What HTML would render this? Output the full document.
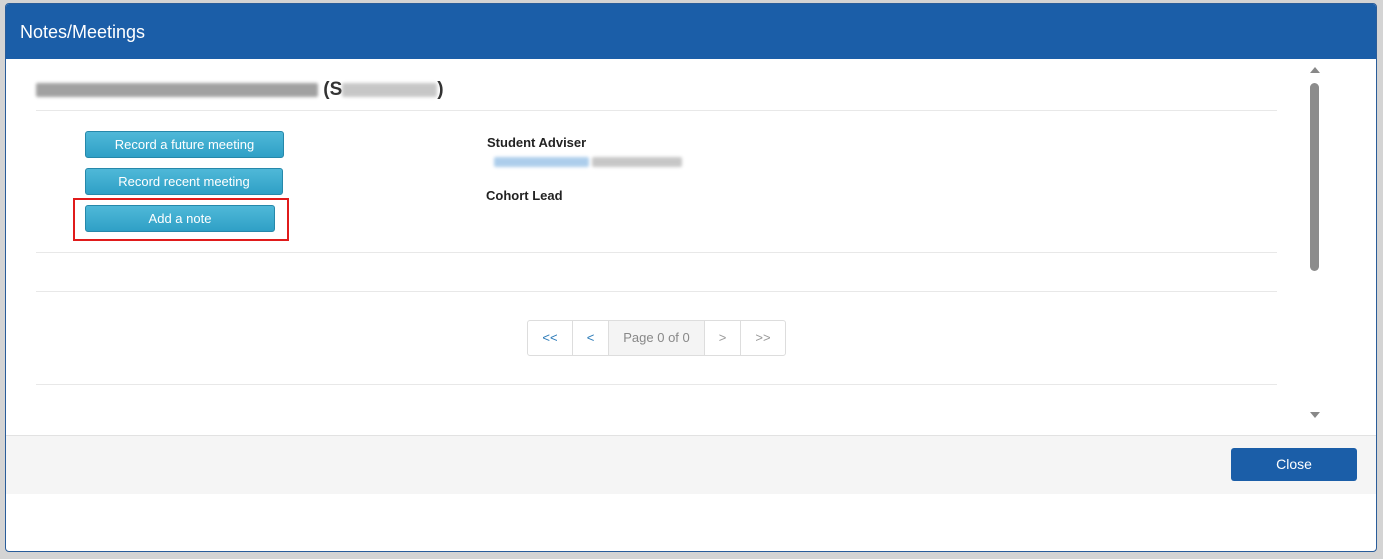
<!DOCTYPE html>
<html><head><style>
*{box-sizing:border-box;margin:0;padding:0}
body{width:1383px;height:559px;background:#d4d4d4;font-family:"Liberation Sans",Arial,sans-serif;position:relative;overflow:hidden}
.dlg{position:absolute;left:5px;top:3px;width:1372px;height:549px;background:#fff;border-radius:4px;border:1px solid #2a5d9a;overflow:hidden}
.hdr{position:absolute;left:0;top:0;width:100%;height:55px;background:#1b5ea8;color:#fff;font-size:18px;padding:18px 0 0 14px}
.abs{position:absolute}
.btn{position:absolute;background:linear-gradient(#4fb8d8,#2fa0c6);border:1px solid #2688aa;border-radius:3px;color:#fff;font-size:13px;text-align:center;line-height:25px;height:27px}
.line{position:absolute;left:30px;width:1241px;height:1px;background:#e8e8e8}
.blur{display:inline-block;height:14px;background:#888;opacity:.55;border-radius:2px;vertical-align:middle;filter:blur(1.5px)}
.pg{position:absolute;top:316px;height:36px;border:1px solid #ddd;font-size:13px;text-align:center;line-height:34px;color:#2a7ab8}
</style></head><body>
<div class="dlg">
<div class="hdr">Notes/Meetings</div>
<div class="abs" style="left:30px;top:75px;font-size:19px;font-weight:bold;color:#333"><span class="blur" style="width:282px;background:#555"></span> (S<span class="blur" style="width:95px;background:#999"></span>)</div>
<div class="line" style="top:106px"></div>
<div class="btn" style="left:79px;top:127px;width:199px">Record a future meeting</div>
<div class="btn" style="left:79px;top:164px;width:198px">Record recent meeting</div>
<div class="btn" style="left:79px;top:201px;width:190px">Add a note</div>
<div class="abs" style="left:67px;top:194px;width:216px;height:43px;border:2px solid #e01b1b"></div>
<div class="abs" style="left:481px;top:131px;font-size:13px;font-weight:bold;color:#222">Student Adviser</div>
<div class="abs" style="left:488px;top:149px"><span class="blur" style="width:95px;height:10px;background:#6aa6dc"></span><span class="blur" style="width:90px;height:10px;background:#999;margin-left:3px"></span></div>
<div class="abs" style="left:480px;top:184px;font-size:13px;font-weight:bold;color:#222">Cohort Lead</div>
<div class="line" style="top:248px"></div>
<div class="line" style="top:287px"></div>
<div class="pg" style="left:521px;width:46px;border-radius:3px 0 0 3px">&lt;&lt;</div>
<div class="pg" style="left:566px;width:37px">&lt;</div>
<div class="pg" style="left:602px;width:97px;background:#f4f4f4;color:#888">Page 0 of 0</div>
<div class="pg" style="left:698px;width:37px;color:#999">&gt;</div>
<div class="pg" style="left:734px;width:46px;color:#999;border-radius:0 3px 3px 0">&gt;&gt;</div>
<div class="line" style="top:380px"></div>
<div class="abs" style="left:1304px;top:63px;width:0;height:0;border-left:5px solid transparent;border-right:5px solid transparent;border-bottom:6px solid #888"></div>
<div class="abs" style="left:1304px;top:79px;width:9px;height:188px;background:#8c8c8c;border-radius:5px"></div>
<div class="abs" style="left:1304px;top:408px;width:0;height:0;border-left:5px solid transparent;border-right:5px solid transparent;border-top:6px solid #888"></div>
<div class="abs" style="left:0;top:431px;width:100%;height:59px;background:#f5f5f5;border-top:1px solid #e2e2e2"></div>
<div class="abs" style="left:1225px;top:444px;width:126px;height:33px;background:#1b5ea8;border-radius:3px;color:#fff;font-size:14px;text-align:center;line-height:33px">Close</div>
</div>
</body></html>
